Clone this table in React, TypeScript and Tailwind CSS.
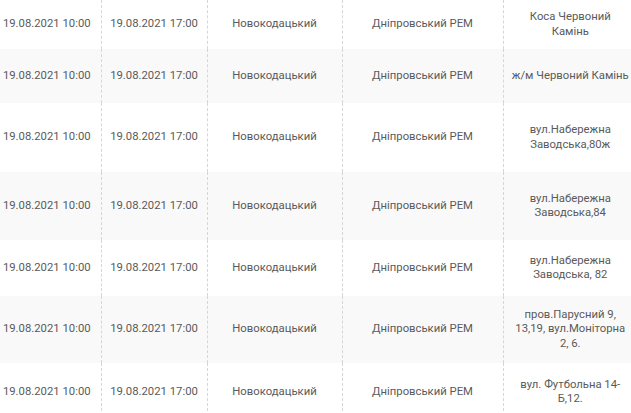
const rows: { place: string; h: string; bg: string }[] = [
  { place: 'Коса Червоний Камінь', h: 'h-[49px]', bg: 'bg-white' },
  { place: 'ж/м Червоний Камінь', h: 'h-[54px]', bg: 'bg-[#f9f9f9]' },
  { place: 'вул.Набережна Заводська,80ж', h: 'h-[69px]', bg: 'bg-white' },
  { place: 'вул.Набережна Заводська,84', h: 'h-[68px]', bg: 'bg-[#f9f9f9]' },
  { place: 'вул.Набережна Заводська, 82', h: 'h-[56px]', bg: 'bg-white' },
  { place: 'пров.Парусний 9, 13,19, вул.Моніторна 2, 6.', h: 'h-[67px]', bg: 'bg-[#f9f9f9]' },
  { place: 'вул. Футбольна 14-Б,12.', h: 'h-[58px]', bg: 'bg-white' },
];

export default function App() {
  return (
    <div className="w-[631px] h-[413px] overflow-hidden bg-white font-['Roboto',_'Liberation_Sans',_sans-serif] text-[11.3px] leading-[14.5px] text-[#5a5a5a]">
      <table className="table-fixed border-collapse w-[637px]">
        <colgroup>
          <col className="w-[101px]" />
          <col className="w-[106px]" />
          <col className="w-[135px]" />
          <col className="w-[161px]" />
          <col className="w-[134px]" />
        </colgroup>
        <tbody>
          {rows.map((r, i) => (
            <tr key={i} className={`${r.h} ${r.bg}`}>
              <td className="pl-0 pr-[7px] text-center align-middle whitespace-nowrap">19.08.2021 10:00</td>
              <td className="px-1 text-center align-middle whitespace-nowrap border-l border-dashed border-[#d6d6d6]">19.08.2021 17:00</td>
              <td className="px-2 text-center align-middle border-l border-dashed border-[#d6d6d6]">Новокодацький</td>
              <td className="px-2 text-center align-middle border-l border-dashed border-[#d6d6d6]">Дніпровський РЕМ</td>
              <td className="px-[7px] text-center align-middle border-l border-dashed border-[#d6d6d6]">{r.place}</td>
            </tr>
          ))}
        </tbody>
      </table>
    </div>
  );
}
